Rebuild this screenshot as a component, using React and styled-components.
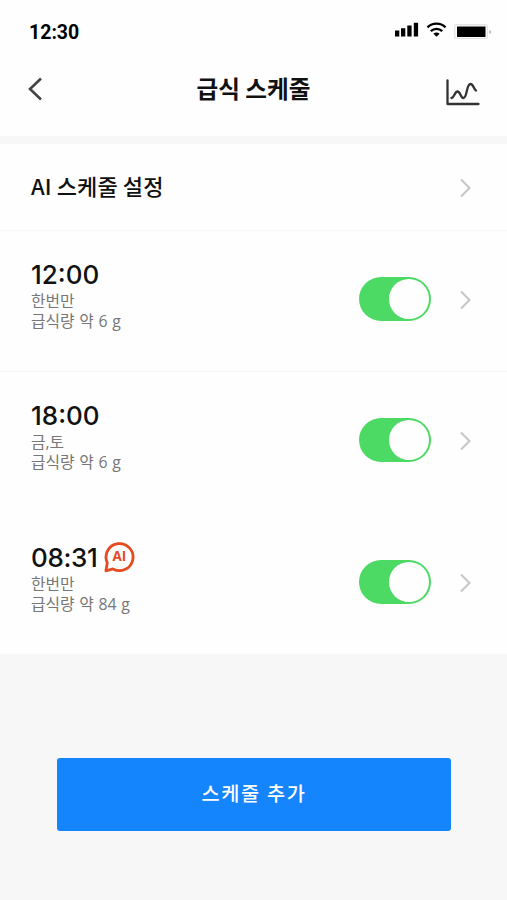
import React from "react";
import styled, { createGlobalStyle } from "styled-components";


const GlobalStyle = createGlobalStyle`
    * {
        box-sizing: border-box;
    }

    body {
        margin: 0;
        background: #f7f7f7;
        font-family: "Noto Sans CJK KR", sans-serif;
        color: #111;
    }
`;


const Screen = styled.main`
    display: flex;
    flex-direction: column;
    width: 507px;
    height: 900px;
    overflow: hidden;
    background: #f7f7f7;
`;


const StatusBar = styled.div`
    display: flex;
    align-items: center;
    justify-content: space-between;
    height: 62px;
    padding: 2px 15px 0 29px;
    background: #fefefe;
`;


const Clock = styled.span`
    margin-top: 1px;
    font: 700 19.5px/24px Roboto, sans-serif;
    color: #000;
`;


const StatusIcons = styled.svg`
    display: block;
    margin-top: -6px;
`;


const Header = styled.header`
    display: grid;
    grid-template-columns: 60px 1fr 60px;
    align-items: center;
    height: 74px;
    padding: 0 27px;
    background: #fefefe;
`;


const Title = styled.h1`
    margin: -22px 0 0;
    font-size: 23.6px;
    line-height: 34px;
    font-weight: 700;
    text-align: center;
    white-space: nowrap;
`;


const IconButton = styled.button`
    display: flex;
    justify-content: ${props => props.$end ? "flex-end" : "flex-start"};
    margin-top: ${props => props.$end ? "-13px" : "-21px"};
    padding: 0;
    border: 0;
    background: none;
`;


const MenuRow = styled.div`
    display: flex;
    align-items: center;
    justify-content: space-between;
    height: 87px;
    margin-top: 8px;
    padding: 1px 36px 0 31px;
    border-bottom: 1px solid #f7f7f7;
    background: #fefefe;
`;


const MenuLabel = styled.span`
    margin-top: -5px;
    font-size: 22px;
    line-height: 32px;
    font-weight: 500;
    letter-spacing: 0.1px;
`;


const ScheduleRow = styled.section`
    display: flex;
    align-items: flex-start;
    height: 141px;
    padding: ${props => props.$top}px 36px 0 31px;
    border-bottom: ${props => props.$divided ? "1px solid #f4f4f4" : "0"};
    background: #fefefe;
`;


const Details = styled.div`
    flex: 1;
    margin-top: -18px;
`;


const TimeLine = styled.div`
    display: flex;
    align-items: center;
    gap: 7px;
    height: 32px;
`;


const Time = styled.span`
    font: 500 26px/32px Inter, sans-serif;
    letter-spacing: ${props => props.$tight ? "-0.35px" : "0"};
`;


const Note = styled.p`
    margin: 0;
    font-family: "Open Sans", "Noto Sans CJK KR", sans-serif;
    font-size: 15.8px;
    line-height: 20px;
    word-spacing: 0.6px;
    color: #777;
`;


const Switch = styled.button`
    display: flex;
    justify-content: flex-end;
    width: 72px;
    height: 44px;
    margin-right: 29px;
    padding: 2px;
    border: 0;
    border-radius: 22px;
    background: #4cd964;
`;


const Knob = styled.span`
    width: 40px;
    height: 40px;
    border-radius: 50%;
    background: #fefefe;
`;


const ChevronBox = styled.span`
    display: flex;
    align-items: center;
    height: 46px;
`;


const Footer = styled.footer`
    flex: 1;
    padding: 104px 56px 0 57px;
`;


const AddButton = styled.button`
    display: block;
    width: 394px;
    height: 73px;
    padding: 0 0 3px;
    border: 0;
    border-radius: 3px;
    background: #1485fd;
    color: #fff;
    font: 500 19.7px/30px "Noto Sans CJK KR", sans-serif;
    letter-spacing: 1.7px;
`;


const Chevron = () => (
    <svg width="11" height="20" viewBox="0 0 11 20" fill="none" stroke="#c6c6c6" strokeWidth="2">
        <path d="M1 1.5 9.5 10 1 18.5"/>
    </svg>
);


const AiBadge = () => (
    <svg width="32" height="32" viewBox="0 0 32 32">
        <path d="M1.900 28.800 3.300 20.800A13.500 13.500 0 1 1 9 26.900Z"
            fill="none" stroke="#e64a1f" strokeWidth="2.8" strokeLinejoin="round"/>
        <text x="15.4" y="18.9" textAnchor="middle" fill="#e64a1f"
            fontFamily="Open Sans, sans-serif" fontSize="13.5" fontWeight="700">AI</text>
    </svg>
);


const schedules = [
    { time: "12:00", days: "한번만", amount: "급식량 약 6 g", top: 46, divided: true },
    { time: "18:00", days: "금,토", amount: "급식량 약 6 g", top: 46.4 },
    { time: "08:31", days: "한번만", amount: "급식량 약 84 g", top: 47, ai: true },
];


const App = () => (
    <Screen>
        <GlobalStyle/>
        <StatusBar>
            <Clock>12:30</Clock>
            <StatusIcons width="98" height="20" viewBox="0 0 98 20">
                <path d="M1 11.5h4.3v6H1zM7 9.2h4.3v8.3H7zM13.3 6.6h4.3v10.9h-4.3zM19.8 3.8h4.3v13.7h-4.3z"/>
                <g fill="none" stroke="#000" strokeWidth="2.3">
                    <path d="M33.5 8.3a13 13 0 0 1 18 0"/>
                    <path d="M36.8 12.2a8.2 8.2 0 0 1 11.4 0"/>
                </g>
                <path d="M39.4 14.8a4.6 4.6 0 0 1 6.2 0l-3.1 3z"/>
                <rect x="60.7" y="5.7" width="32.6" height="14" rx="2" fill="#fff" stroke="#e4e4e4" strokeWidth="1.4"/>
                <rect x="63" y="7.5" width="28.5" height="10.5" />
                <path d="M95.5 11v4q1.6-.6 1.6-2t-1.6-2" fill="#aaa"/>
            </StatusIcons>
        </StatusBar>
        <Header>
            <IconButton aria-label="뒤로">
                <svg width="16" height="24" viewBox="0 0 16 24" fill="none" stroke="#444" strokeWidth="2.6">
                    <path d="M14 1.5 3 12 14 22.5"/>
                </svg>
            </IconButton>
            <Title>급식 스케줄</Title>
            <IconButton $end aria-label="통계">
                <svg width="35" height="28" viewBox="0 0 35 28" fill="none" stroke="#333"
                    strokeWidth="2.3" strokeLinecap="round" strokeLinejoin="round">
                    <path d="M2.500 1.500v23.500h31"/>
                    <path d="M6.500 19C9.500 18.500 9.500 12.500 12.500 12.500s3 6.500 6 6.500c3.800 0 2.700-14 7-14 3 0 3 5 5.500 6.500"/>
                </svg>
            </IconButton>
        </Header>
        <MenuRow>
            <MenuLabel>AI 스케줄 설정</MenuLabel>
            <Chevron/>
        </MenuRow>
        {schedules.map(item => (
            <ScheduleRow key={ item.time } $top={ item.top } $divided={ item.divided }>
                <Details>
                    <TimeLine>
                        <Time $tight={ item.ai }>{ item.time }</Time>
                        { item.ai && <AiBadge/> }
                    </TimeLine>
                    <Note>{ item.days }</Note>
                    <Note>{ item.amount }</Note>
                </Details>
                <Switch role="switch" aria-checked="true"><Knob/></Switch>
                <ChevronBox><Chevron/></ChevronBox>
            </ScheduleRow>
        ))}
        <Footer>
            <AddButton>스케줄 추가</AddButton>
        </Footer>
    </Screen>
);

export default App;
